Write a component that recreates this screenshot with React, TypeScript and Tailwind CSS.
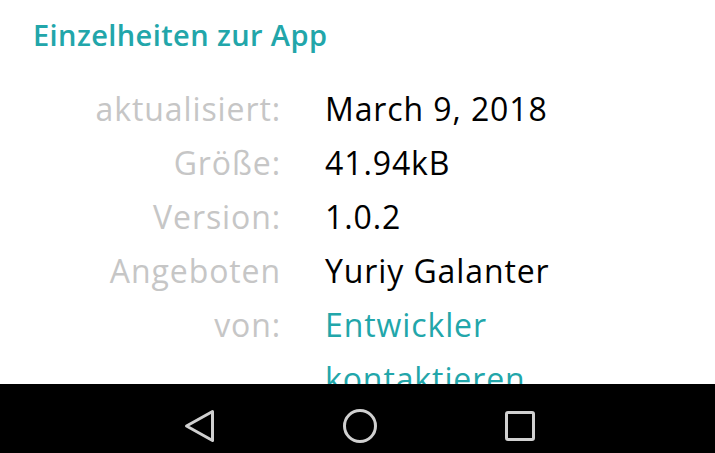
import React from 'react';

const rows: { label: string; value: string[]; link?: string }[] = [
  { label: 'aktualisiert:', value: ['March 9, 2018'] },
  { label: 'Größe:', value: ['41.94kB'] },
  { label: 'Version:', value: ['1.0.2'] },
  { label: 'Angeboten von:', value: ['Yuriy Galanter'], link: 'Entwickler kontaktieren' },
];

export default function App() {
  return (
    <div className="w-[715px] h-[453px] flex flex-col bg-white font-['Open_Sans',sans-serif] overflow-hidden">
      <div className="h-[384px] shrink-0 overflow-hidden px-[33px] pt-[17px]">
        <h2 className="text-[29px] leading-[36px] font-semibold tracking-[0.4px] text-[#22a6aa]">Einzelheiten zur App</h2>

        <div className="mt-[29px] ml-[18px] grid grid-cols-[230px_330px] gap-x-[44px] text-[32px] leading-[54px] tracking-[0.9px]">
          {rows.map((row, i) => (
            <React.Fragment key={i}>
              <div className="text-right text-[#c6c6c6]">{row.label}</div>
              <div className="text-black">
                {row.value.map((v) => (
                  <div key={v}>{v}</div>
                ))}
                {row.link && <a className="block text-[#22a6aa]">{row.link}</a>}
              </div>
            </React.Fragment>
          ))}
        </div>
      </div>

      {/* Android nav bar */}
      <nav className="flex-1 bg-black flex items-start justify-center gap-[126px] pt-[25px] pl-[5px]">
        <svg width="34" height="34" viewBox="0 0 34 34" fill="none" stroke="#d0d0d0" strokeWidth="3" strokeLinejoin="round">
          <path d="M29.5 2.5 L3.5 17 L29.5 31.5 Z" />
        </svg>
        <svg width="34" height="34" viewBox="0 0 34 34" fill="none" stroke="#d0d0d0" strokeWidth="3">
          <circle cx="17" cy="17" r="15.5" />
        </svg>
        <svg width="34" height="34" viewBox="0 0 34 34" fill="none" stroke="#d0d0d0" strokeWidth="3">
          <rect x="3.5" y="3.5" width="27" height="27" rx="1.5" />
        </svg>
      </nav>
    </div>
  );
}
